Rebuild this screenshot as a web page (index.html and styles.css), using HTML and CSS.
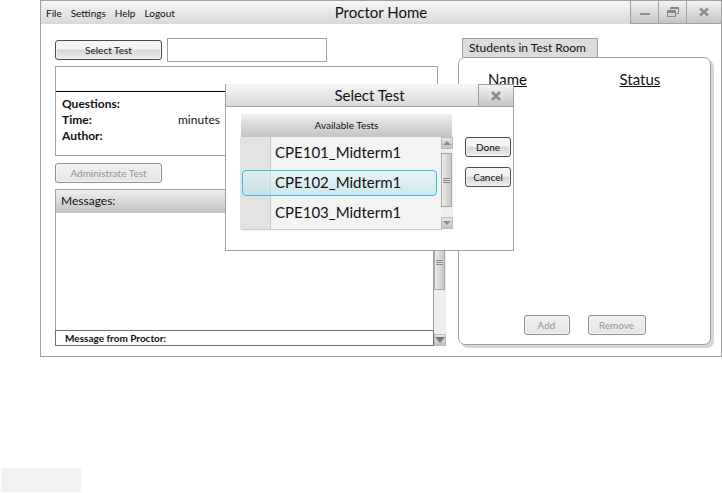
FILE: index.html
```html
<!DOCTYPE html>
<html lang="en">
<head>
<meta charset="utf-8">
<title>Proctor Home</title>
<link rel="stylesheet" href="styles.css">
</head>
<body>
<main class="window">
  <header class="titlebar">
    <nav class="menu">
      <button type="button">File</button>
      <button type="button">Settings</button>
      <button type="button">Help</button>
      <button type="button">Logout</button>
    </nav>
    <h1 class="title">Proctor Home</h1>
    <div class="window-controls">
      <button type="button" class="control" aria-label="Minimize">
        <svg width="12" height="12" viewBox="0 0 12 12"><path d="M1 8h10" stroke="#8c8c8c" stroke-width="2"/></svg>
      </button>
      <button type="button" class="control" aria-label="Restore">
        <svg width="12" height="12" viewBox="0 0 12 12" fill="none" stroke="#858585"><path d="M3.500 3.500V1.500H11.500V7.500H9.500M3 2.500H12"/><path d="M0.500 4.500H8.500V10.500H0.500ZM0 5.500H9M0 6.500H9"/></svg>
      </button>
      <button type="button" class="control" aria-label="Close">
        <svg width="10" height="10" viewBox="0 0 10 10"><path d="M1 1.500L9 8.500M9 1.500L1 8.500" stroke="#8c8c8c" stroke-width="2.500"/></svg>
      </button>
    </div>
  </header>

  <div class="content">
    <section class="left">
      <div class="picker">
        <button type="button" class="btn wide">Select Test</button>
        <input class="field" type="text" aria-label="Selected test">
      </div>
      <div class="details">
        <div class="details-head"></div>
        <dl class="facts">
          <dt>Questions:</dt><dd></dd>
          <dt>Time:</dt><dd>minutes</dd>
          <dt>Author:</dt><dd></dd>
        </dl>
      </div>
      <button type="button" class="btn wide" disabled>Administrate Test</button>
      <div class="messages">
        <div class="messages-main">
          <h2 class="messages-head">Messages:</h2>
          <div class="messages-log"></div>
          <label class="compose">Message from Proctor:<input type="text"></label>
        </div>
        <div class="scroll">
          <button type="button" class="arrow" aria-label="Scroll up"><svg width="8" height="6" viewBox="0 0 8 6"><path d="M4 1L8 5H0Z" fill="#8c8c8c"/></svg></button>
          <div class="track messages-track"><div class="thumb"><i class="grip"></i></div></div>
          <button type="button" class="arrow" aria-label="Scroll down"><svg width="10" height="6" viewBox="0 0 10 6"><path d="M0 0H10L5 6Z" fill="#777"/></svg></button>
        </div>
      </div>
    </section>

    <section class="students">
      <h2 class="tab">Students in Test Room</h2>
      <div class="room">
        <table class="roster">
          <thead><tr><th>Name</th><th>Status</th></tr></thead>
        </table>
        <div class="room-actions">
          <button type="button" class="btn small" disabled>Add</button>
          <button type="button" class="btn medium" disabled>Remove</button>
        </div>
      </div>
    </section>
  </div>

  <section class="dialog" role="dialog" aria-labelledby="dialog-title">
    <header class="dialog-bar">
      <h2 class="title" id="dialog-title">Select Test</h2>
      <button type="button" class="control" aria-label="Close dialog">
        <svg width="10" height="10" viewBox="0 0 10 10"><path d="M1 1L9 9M9 1L1 9" stroke="#8c8c8c" stroke-width="2.500"/></svg>
      </button>
    </header>
    <div class="dialog-body">
      <div class="tests">
        <h3 class="tests-head">Available Tests</h3>
        <div class="tests-row">
          <div class="list">
            <button type="button" class="item">CPE101_Midterm1</button>
            <button type="button" class="item selected" aria-pressed="true">CPE102_Midterm1</button>
            <button type="button" class="item">CPE103_Midterm1</button>
          </div>
          <div class="scroll">
            <button type="button" class="arrow" aria-label="Scroll tests up"><svg width="8" height="6" viewBox="0 0 8 6"><path d="M4 1L8 5H0Z" fill="#8c8c8c"/></svg></button>
            <div class="track tests-track"><div class="thumb"><i class="grip"></i></div></div>
            <button type="button" class="arrow" aria-label="Scroll tests down"><svg width="8" height="6" viewBox="0 0 8 6"><path d="M0 1H8L4 5Z" fill="#8c8c8c"/></svg></button>
          </div>
        </div>
      </div>
      <div class="dialog-actions">
        <button type="button" class="btn small">Done</button>
        <button type="button" class="btn small">Cancel</button>
      </div>
    </div>
  </section>
</main>
<footer class="footer"></footer>
</body>
</html>
```
FILE: styles.css
```css
* { box-sizing: border-box; }

body {
  margin: 0;
  min-height: 100vh;
  display: flex;
  flex-direction: column;
  background: #fff;
  color: #111;
  font-family: Lato, "Open Sans", sans-serif;
  font-size: 10px;
}

button, input { font: inherit; color: inherit; }
button { padding: 0; border: 0; background: none; }
h1, h2, h3, dl, dd { margin: 0; font-weight: 400; }
svg { display: block; }

.window {
  position: relative;
  margin-left: 40px;
  border: 1px solid #a0a0a0;
}

.titlebar, .dialog-bar {
  display: grid;
  grid-template-columns: 1fr auto 1fr;
  background: linear-gradient(#f6f6f6, #d9d9d9);
}
.titlebar { height: 23px; }
.menu { display: flex; align-items: center; gap: 9px; padding-left: 5px; }
.title { font-size: 15px; line-height: 22px; }
.window-controls { display: flex; justify-content: flex-end; }
.control {
  display: grid;
  place-items: center;
  width: 28px;
  border-left: 1px solid #a0a0a0;
  border-bottom: 1px solid #a0a0a0;
  background: linear-gradient(#f4f4f4, #c4c4c4);
}
.window-controls .control:last-child { width: 35px; }

.content {
  display: grid;
  grid-template-columns: 391fr 253fr;
  gap: 12px;
  padding: 14px 10px 10px 14px;
}

.left { display: flex; flex-direction: column; align-items: flex-start; }
.picker { display: flex; align-items: center; gap: 5px; margin-bottom: 4px; }
.field { width: 160px; height: 24px; border: 1px solid #a0a0a0; padding: 0 5px; }

.btn {
  height: 20px;
  padding-bottom: 1px;
  border: 1px solid #4a4a4a;
  border-radius: 3px;
  background: linear-gradient(#f4f4f4 0 45%, #d6d6d6 50%, #ececec);
  box-shadow: inset 0 0 0 1px #f5f5f5;
}
.btn:disabled {
  border-color: #8f8f8f;
  background: linear-gradient(#f0f0f0, #e6e6e6);
  color: #969696;
}
.wide { width: 107px; }
.small { width: 46px; }
.medium { width: 58px; }

.details {
  align-self: stretch;
  height: 90px;
  margin: 0 8px 7px 0;
  border: 1px solid #a0a0a0;
}
.details-head { height: 25px; border-bottom: 1px solid #000; }
.facts {
  display: grid;
  grid-template-columns: 116px 1fr;
  padding: 4px 6px;
  font-size: 12px;
  line-height: 16px;
}
.facts dt { font-weight: 700; }

.messages {
  display: flex;
  align-self: stretch;
  height: 157px;
  margin-top: 6px;
}
.messages-main {
  flex: 1;
  display: flex;
  flex-direction: column;
  border: 1px solid #a0a0a0;
}
.messages-head {
  height: 23px;
  padding-left: 5px;
  background: linear-gradient(#efefef, #c2c2c2);
  font-size: 12px;
  line-height: 22px;
}
.messages-log { flex: 1; }
.compose {
  display: flex;
  align-items: center;
  height: 16px;
  margin: 0 -1px -1px;
  padding: 0 0 1px 9px;
  border: 1px solid #707070;
  background: #fff;
  font-weight: 700;
}
.compose input { flex: 1; min-width: 0; height: 12px; border: 0; padding: 0 4px; font-weight: 400; }

.scroll { display: flex; flex-direction: column; width: 12px; background: #eee; }
.arrow {
  display: grid;
  place-items: center;
  height: 12px;
  border: 1px solid #bbb;
  background: linear-gradient(#e6e6e6, #c2c2c2);
}
.track { flex: 1; display: flex; flex-direction: column; }
.thumb {
  flex: 1;
  display: grid;
  place-items: center;
  border: 1px solid #a8a8a8;
  background: linear-gradient(90deg, #ececec, #c6c6c6);
}
.grip { width: 7px; height: 5px; background: repeating-linear-gradient(#888 0 1px, #ddd 1px 2px); }
.messages-track { padding: 33px 1px 44px 0; }
.tests-track { padding: 4px 1px 10px 0; }

.students { display: flex; flex-direction: column; align-items: flex-start; }
.tab {
  height: 19px;
  margin-left: 4px;
  padding: 0 11px 0 6px;
  border: 1px solid #a0a0a0;
  border-bottom: 0;
  background: #dcdcdc;
  font-size: 12px;
  line-height: 18px;
}
.room {
  align-self: stretch;
  flex: 1;
  display: flex;
  flex-direction: column;
  justify-content: space-between;
  margin-bottom: 1px;
  padding: 11px 10px 9px;
  border: 1px solid #a0a0a0;
  border-radius: 7px;
  background: #fff;
  box-shadow: 3px 3px 0 #d6d6d6;
}
.roster { width: 100%; border-collapse: collapse; table-layout: fixed; }
.roster th {
  padding: 0 0 0 19px;
  text-align: left;
  font-size: 15px;
  font-weight: 400;
  line-height: 20px;
  text-decoration: underline;
}
.roster th + th { padding-left: 35px; }
.room-actions { display: flex; justify-content: center; gap: 18px; }

.dialog {
  position: absolute;
  top: 83px;
  left: 184px;
  width: 289px;
  border: 1px solid #a0a0a0;
  border-top: 0;
  background: #fff;
}
.dialog-bar { height: 23px; border-bottom: 1px solid #a0a0a0; }
.dialog-bar .title { grid-column: 2; }
.dialog-bar .control {
  justify-self: end;
  width: 35px;
  border-top: 1px solid #a0a0a0;
  border-bottom: 0;
}
.dialog-body { display: flex; gap: 12px; padding: 7px 2px 21px 14px; }
.tests { flex: 1; }
.tests-head {
  height: 23px;
  margin: 0 1px;
  background: linear-gradient(#efefef, #c2c2c2);
  font-size: 10px;
  line-height: 23px;
  text-align: center;
}
.tests-row { display: flex; }
.list {
  flex: 1;
  display: flex;
  flex-direction: column;
  gap: 4px;
  padding: 3px 4px 3px 2px;
  background: linear-gradient(90deg, #e3e3e3 30px, #c8c8c8 30px 31px, #f3f3f3 31px);
  box-shadow: 1px 1px 1px #ccc;
}
.item {
  height: 26px;
  padding: 0 0 2px 32px;
  border: 1px solid transparent;
  border-radius: 4px;
  text-align: left;
  font-size: 15px;
}
.selected {
  border-color: #2fbfdc;
  background: linear-gradient(#e2f4f799, #b5dfe899);
}
.dialog-actions { display: flex; flex-direction: column; gap: 10px; padding-top: 23px; }

.footer { width: 80px; height: 24px; margin: auto 0 1px 1px; background: #f1f1f1; }
```
